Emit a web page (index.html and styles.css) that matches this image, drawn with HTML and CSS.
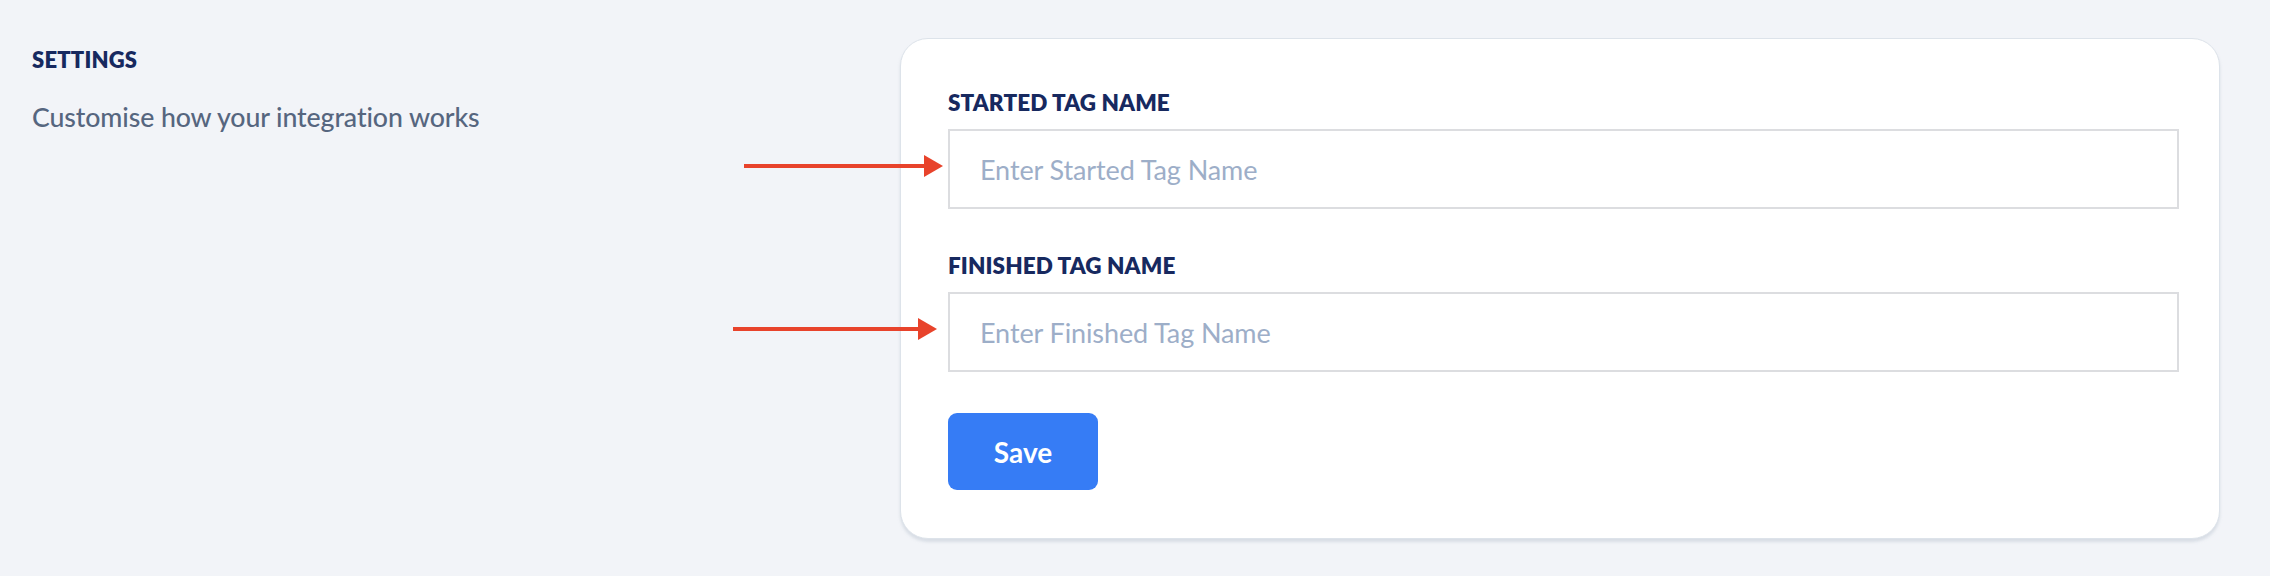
FILE: index.html
```html
<!DOCTYPE html>
<html lang="en">
<head>
<meta charset="utf-8">
<title>Settings</title>
<link rel="stylesheet" href="styles.css">
</head>
<body>
<div class="page">
  <aside class="intro">
    <h2 class="intro-title">SETTINGS</h2>
    <p class="intro-text">Customise how your integration works</p>
  </aside>
  <section class="card">
    <form class="form">
      <div class="field">
        <label class="field-label" for="started">STARTED TAG NAME</label>
        <div class="field-wrap">
          <svg class="pointer pointer-one" width="200" height="24" viewBox="0 0 200 24" aria-hidden="true">
            <rect x="0" y="10" width="184" height="4" fill="#e8432b"/>
            <polygon points="180,1 199,12 180,23" fill="#e8432b"/>
          </svg>
          <input class="field-input" id="started" type="text" placeholder="Enter Started Tag Name">
        </div>
      </div>
      <div class="field">
        <label class="field-label" for="finished">FINISHED TAG NAME</label>
        <div class="field-wrap">
          <svg class="pointer pointer-two" width="205" height="24" viewBox="0 0 205 24" aria-hidden="true">
            <rect x="0" y="10" width="189" height="4" fill="#e8432b"/>
            <polygon points="185,1 204,12 185,23" fill="#e8432b"/>
          </svg>
          <input class="field-input" id="finished" type="text" placeholder="Enter Finished Tag Name">
        </div>
      </div>
      <button class="save-btn" type="button">Save</button>
    </form>
  </section>
</div>
</body>
</html>
```
FILE: styles.css
```css
* { box-sizing: border-box; }
html, body {
  margin: 0;
  padding: 0;
  background: #f2f4f8;
  font-family: "Lato", "Open Sans", sans-serif;
}
.page {
  display: flex;
  align-items: flex-start;
  padding: 38px 50px 38px 32px;
}
.intro {
  flex: 0 0 868px;
  padding-top: 8px;
}
.intro-title {
  margin: 0;
  font-size: 22px;
  line-height: 28px;
  font-weight: 800;
  color: #17295f;
  letter-spacing: 0.2px;
}
.intro-text {
  margin: 26px 0 0;
  font-size: 26.7px;
  line-height: 34px;
  font-weight: 500;
  color: #56667f;
  letter-spacing: -0.1px;
}
.card {
  flex: 1;
  background: #fff;
  border: 1px solid #dde3ea;
  border-radius: 28px;
  box-shadow: 0 3px 3px rgba(170, 180, 195, 0.35);
  padding: 50px 40px 48px 47px;
}
.form {
  display: flex;
  flex-direction: column;
  align-items: flex-start;
}
.field {
  width: 100%;
  margin-bottom: 41px;
}
.field + .field { margin-top: 2px; }
.field-label {
  display: block;
  font-size: 22.5px;
  line-height: 28px;
  font-weight: 800;
  color: #17295f;
  letter-spacing: 0.1px;
  margin-bottom: 12px;
}
.field-wrap {
  position: relative;
}
.field-input {
  display: block;
  width: 100%;
  height: 80px;
  border: 2px solid #dcdde0;
  border-radius: 0;
  padding: 0 30px;
  font-family: "Lato", "Open Sans", sans-serif;
  font-size: 27px;
  color: #34405a;
  background: #fff;
  outline: none;
}
.field-input::placeholder {
  color: #9daec8;
  letter-spacing: -0.1px;
}
.pointer {
  position: absolute;
  top: 25px;
  pointer-events: none;
}
.pointer-one { left: -204px; }
.pointer-two { left: -215px; }
.save-btn {
  width: 150px;
  height: 77px;
  border: none;
  border-radius: 9px;
  background: #367cf5;
  color: #fff;
  font-family: "Lato", "Open Sans", sans-serif;
  font-size: 28px;
  font-weight: 700;
  cursor: pointer;
}
```
